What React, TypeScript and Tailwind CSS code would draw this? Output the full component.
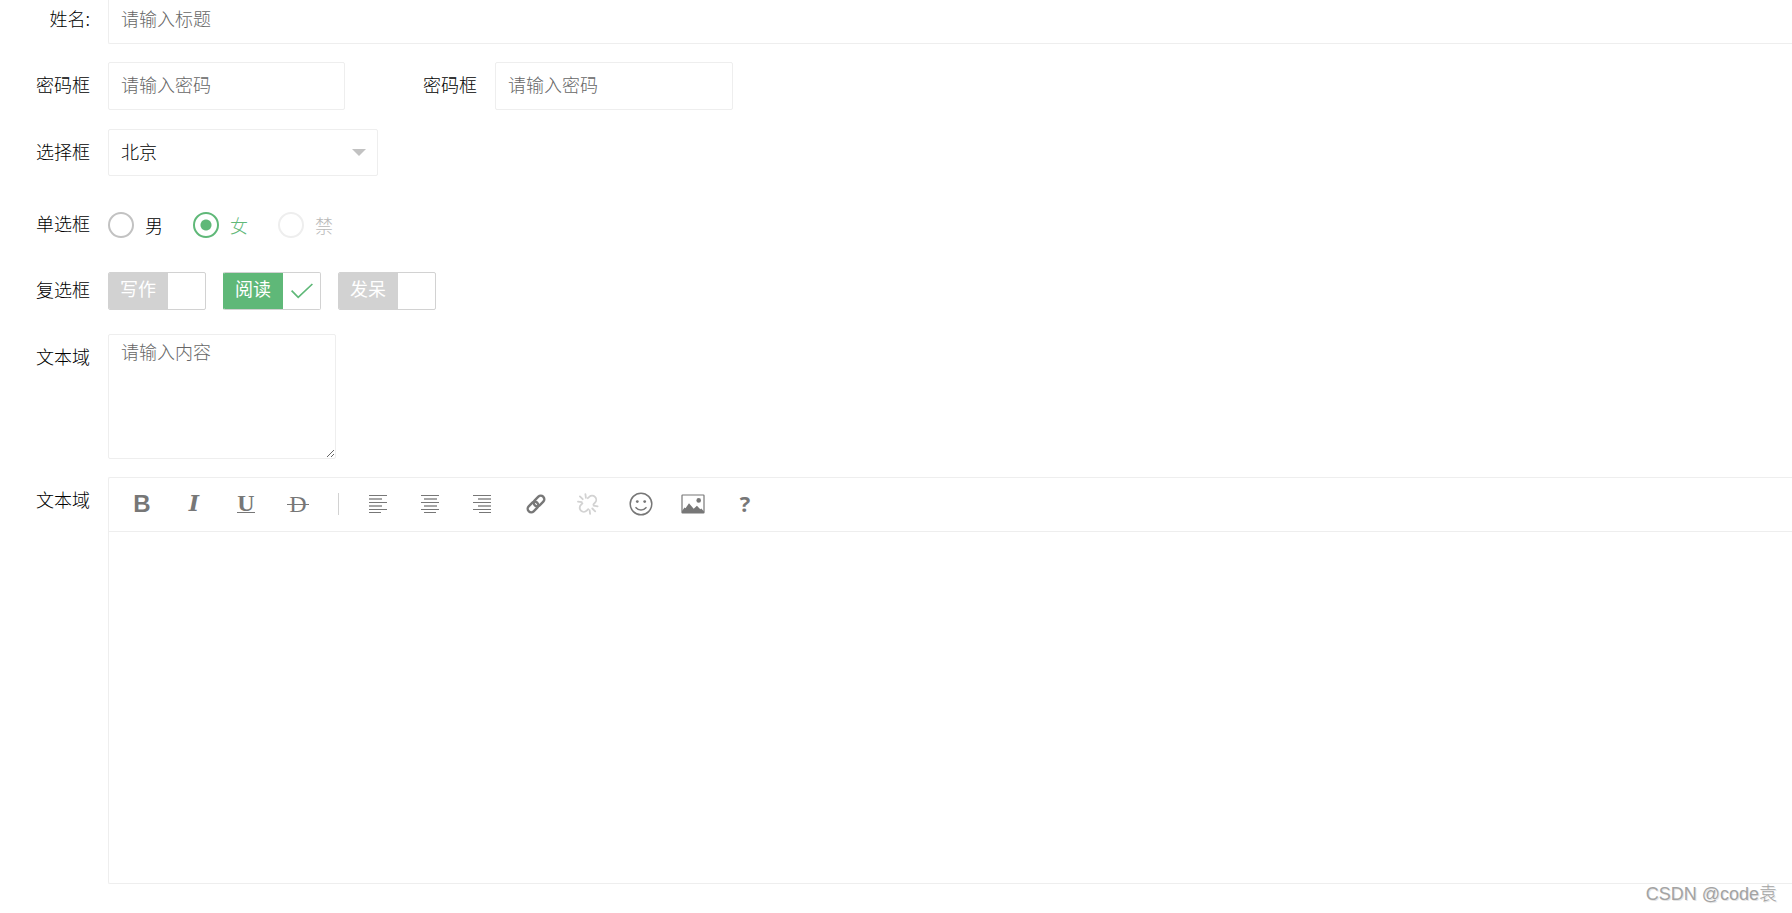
import { useState, type ReactNode } from 'react';

const fieldClass =
  'rounded-[2px] border border-[#eee] bg-white px-3 pb-1 text-lg font-light text-black outline-none placeholder:text-[#666] placeholder:opacity-100';

const genders = [
  { value: 'male', label: '男' },
  { value: 'female', label: '女' },
  { value: 'none', label: '禁', disabled: true },
];

const hobbies = [
  { value: 'write', label: '写作' },
  { value: 'read', label: '阅读' },
  { value: 'daze', label: '发呆' },
];

function FormLabel({ htmlFor, children }: { htmlFor?: string; children: ReactNode }) {
  const className = 'w-[108px] shrink-0 pr-[18px] pt-2 text-right leading-7';
  return htmlFor ? (
    <label htmlFor={htmlFor} className={className}>{children}</label>
  ) : (
    <span className={className}>{children}</span>
  );
}

function ToolButton({ title, disabled, children }: { title: string; disabled?: boolean; children: ReactNode }) {
  return (
    <button
      type="button"
      title={title}
      aria-label={title}
      disabled={disabled}
      className="flex h-8 w-8 items-center justify-center text-[#777] enabled:cursor-pointer disabled:text-[#d2d2d2]"
    >
      {children}
    </button>
  );
}

function AlignIcon({ align }: { align: 'left' | 'center' | 'right' }) {
  const lines = [
    { y: 0, w: 18, h: 1 },
    { y: 3, w: 13, h: 2 },
    { y: 7, w: 18, h: 1 },
    { y: 10, w: 13, h: 2 },
    { y: 14, w: 18, h: 1 },
    { y: 17, w: 12, h: 1 },
  ];
  return (
    <svg width="18" height="18" viewBox="0 0 18 18" fill="currentColor">
      {lines.map(({ y, w, h }) => {
        const x = align === 'left' ? 0 : align === 'right' ? 18 - w : Math.round((18 - w) / 2);
        return <rect key={y} x={x} y={y} width={w} height={h} opacity={h === 2 ? 0.65 : 1} />;
      })}
    </svg>
  );
}

function LinkIcon() {
  return (
    <svg width="20" height="20" viewBox="0 0 20 20" fill="none" stroke="currentColor" strokeWidth="2.4">
      <rect x="7" y="3.5" width="12" height="7" rx="3.4" transform="rotate(-45 13 7)" />
      <rect x="1" y="9.5" width="12" height="7" rx="3.4" transform="rotate(-45 7 13)" />
    </svg>
  );
}

function UnlinkIcon() {
  return (
    <svg width="22" height="22" viewBox="0 0 22 22" fill="none" stroke="currentColor" strokeWidth="1.8" strokeLinecap="round">
      <path d="M10.8 5.2l1.4-1.3a4 4 0 0 1 5.8 5.8l-1.6 1.6" />
      <path d="M5.4 10.3l-1.5 1.6a4 4 0 0 0 5.8 5.8l1.5-1.5" />
      <path d="M8.4 1.2l.5 3.6M2.9 3.4l2.8 2.8M1 8.6l3.7.6M12.6 17.2l.5 3.6M15.3 15.5l2.9 2.8M16.6 12.6l4 .7" />
    </svg>
  );
}

function SmileIcon() {
  return (
    <svg width="24" height="24" viewBox="0 0 24 24" fill="none" stroke="currentColor" strokeWidth="1.5">
      <circle cx="12" cy="12" r="10.8" />
      <circle cx="8.3" cy="9.6" r="1.4" fill="currentColor" stroke="none" />
      <circle cx="15.7" cy="9.6" r="1.4" fill="currentColor" stroke="none" />
      <path d="M7 15.6c2.3 3.2 7.7 3.2 10 0" strokeLinecap="round" />
    </svg>
  );
}

function ImageIcon() {
  return (
    <svg width="24" height="20" viewBox="0 0 24 20" fill="currentColor">
      <rect x="1" y="1" width="22" height="18" rx="0.5" fill="none" stroke="currentColor" strokeWidth="1.2" />
      <path d="M1 17l2.5-3.5 1 .8L8 9.2l4.7 5.6 3.2-3.1 3.4 3.6 1-.8L23 17.5V19H1z" />
      <circle cx="17.7" cy="6.4" r="2.3" />
    </svg>
  );
}

export default function App() {
  const [city, setCity] = useState('beijing');
  const [gender, setGender] = useState('female');
  const [checked, setChecked] = useState<string[]>(['read']);

  const toggle = (value: string) => {
    setChecked(prev => (prev.includes(value) ? prev.filter(v => v !== value) : [...prev, value]));
  };

  return (
    <div className="relative overflow-hidden bg-white pb-7 font-['Noto_Sans_CJK_SC',sans-serif] text-lg font-light text-black">
      <form className="-mt-1 flex flex-col" onSubmit={e => e.preventDefault()}>
        <div className="flex">
          <FormLabel htmlFor="title">姓名:</FormLabel>
          <input id="title" type="text" placeholder="请输入标题" className={`${fieldClass} h-12 min-w-0 flex-1 rounded-r-none border-r-0`} />
        </div>

        <div className="mt-[18px] flex">
          <FormLabel htmlFor="password">密码框</FormLabel>
          <input id="password" type="password" placeholder="请输入密码" className={`${fieldClass} h-12 w-[237px]`} />
          <div className="ml-[42px] flex">
            <FormLabel htmlFor="password2">密码框</FormLabel>
            <input id="password2" type="password" placeholder="请输入密码" className={`${fieldClass} h-12 w-[238px]`} />
          </div>
        </div>

        <div className="mt-[19px] flex">
          <FormLabel htmlFor="city">选择框</FormLabel>
          <div className="relative">
            <select
              id="city"
              value={city}
              onChange={e => setCity(e.target.value)}
              className={`${fieldClass} h-[47px] w-[270px] appearance-none`}
            >
              <option value="beijing">北京</option>
              <option value="shanghai">上海</option>
              <option value="guangzhou">广州</option>
            </select>
            <span className="pointer-events-none absolute top-5 right-3 border-x-[7px] border-t-[7px] border-x-transparent border-t-[#c2c2c2]" />
          </div>
        </div>

        <div className="mt-[25px] flex">
          <FormLabel>单选框</FormLabel>
          <div className="flex gap-[30px] pt-[11px]" role="radiogroup" aria-label="单选框">
            {genders.map(item => (
              <label
                key={item.value}
                className="flex h-[26px] items-center gap-[11px] text-black has-checked:text-[#5fb878] has-disabled:text-[#b8b8b8]"
              >
                <input
                  type="radio"
                  name="gender"
                  checked={gender === item.value}
                  disabled={item.disabled}
                  onChange={() => setGender(item.value)}
                  className="h-[26px] w-[26px] appearance-none rounded-full border-2 border-[#c2c2c2] checked:border-[#5fb878] checked:bg-[radial-gradient(circle,#5fb878_5px,transparent_6px)] disabled:border-[#eee]"
                />
                <span>{item.label}</span>
              </label>
            ))}
          </div>
        </div>

        <div className="mt-[29px] flex">
          <FormLabel>复选框</FormLabel>
          <div className="flex gap-[17px] pt-[5px]">
            {hobbies.map(item => (
              <label key={item.value} className="group flex h-[38px] w-[98px] overflow-hidden rounded-[2px] border border-[#d2d2d2] has-checked:border-l-[#5fb878]">
                <span className="-my-px w-[59px] bg-[#d2d2d2] pl-[11px] leading-8 font-normal text-white group-has-checked:bg-[#5fb878]">
                  {item.label}
                </span>
                <input
                  type="checkbox"
                  checked={checked.includes(item.value)}
                  onChange={() => toggle(item.value)}
                  className="sr-only"
                />
                <span className="flex flex-1 items-center justify-center text-[#5fb878] opacity-0 group-has-checked:opacity-100">
                  <svg width="22" height="16" viewBox="0 0 22 16" fill="none" stroke="currentColor" strokeWidth="1.7">
                    <path d="M.6 7.6l6.6 6.8L21.4 1" />
                  </svg>
                </span>
              </label>
            ))}
          </div>
        </div>

        <div className="mt-6 flex">
          <FormLabel htmlFor="content">文本域</FormLabel>
          <textarea
            id="content"
            placeholder="请输入内容"
            className="h-[125px] w-[228px] resize rounded-[2px] border border-[#eee] bg-white px-3 py-0.5 text-lg leading-7 font-light outline-none placeholder:text-[#666] placeholder:opacity-100"
          />
        </div>

        <div className="mt-[18px] flex">
          <FormLabel>文本域</FormLabel>
          <div className="min-w-0 flex-1 rounded-l-[2px] border border-r-0 border-[#eee]">
            <div className="flex h-[54px] items-center border-b border-[#eee] pb-0.5 pl-[17px]">
              <div className="flex gap-5">
                <ToolButton title="加粗">
                  <span className="font-['Liberation_Sans',sans-serif] text-2xl font-bold">B</span>
                </ToolButton>
                <ToolButton title="斜体">
                  <span className="font-['DejaVu_Serif',serif] text-[22px] font-bold italic">I</span>
                </ToolButton>
                <ToolButton title="下划线">
                  <span className="border-b border-current font-['Liberation_Serif',serif] text-2xl leading-[17px] font-bold">U</span>
                </ToolButton>
                <ToolButton title="删除线">
                  <span className="relative px-0.5 font-['Liberation_Serif',serif] text-2xl leading-6 font-normal">
                    D
                    <span className="absolute inset-x-0 top-1/2 h-px bg-current" />
                  </span>
                </ToolButton>
              </div>
              <span className="mr-[23px] ml-6 h-[22px] w-px bg-[#d2d2d2]" />
              <div className="flex gap-5">
                <ToolButton title="左对齐"><AlignIcon align="left" /></ToolButton>
                <ToolButton title="居中对齐"><AlignIcon align="center" /></ToolButton>
                <ToolButton title="右对齐"><AlignIcon align="right" /></ToolButton>
              </div>
              <div className="ml-[22px] flex gap-5">
                <ToolButton title="插入链接"><LinkIcon /></ToolButton>
                <ToolButton title="清除链接" disabled><UnlinkIcon /></ToolButton>
              </div>
              <div className="ml-[21px] flex gap-5">
                <ToolButton title="表情"><SmileIcon /></ToolButton>
                <ToolButton title="图片"><ImageIcon /></ToolButton>
                <ToolButton title="帮助">
                  <span className="font-['Open_Sans',sans-serif] text-[22px] font-bold">?</span>
                </ToolButton>
              </div>
            </div>
            <div contentEditable suppressContentEditableWarning role="textbox" aria-label="文本域" className="h-[351px] p-3 outline-none" />
          </div>
        </div>
      </form>

      <div className="absolute right-[15px] bottom-1.5 font-['Liberation_Sans','Noto_Sans_CJK_SC',sans-serif] text-lg leading-6 font-light text-[#a3a3a3] text-shadow-[1px_1px_0_#e5e5e5]">
        CSDN @code袁
      </div>
    </div>
  );
}
